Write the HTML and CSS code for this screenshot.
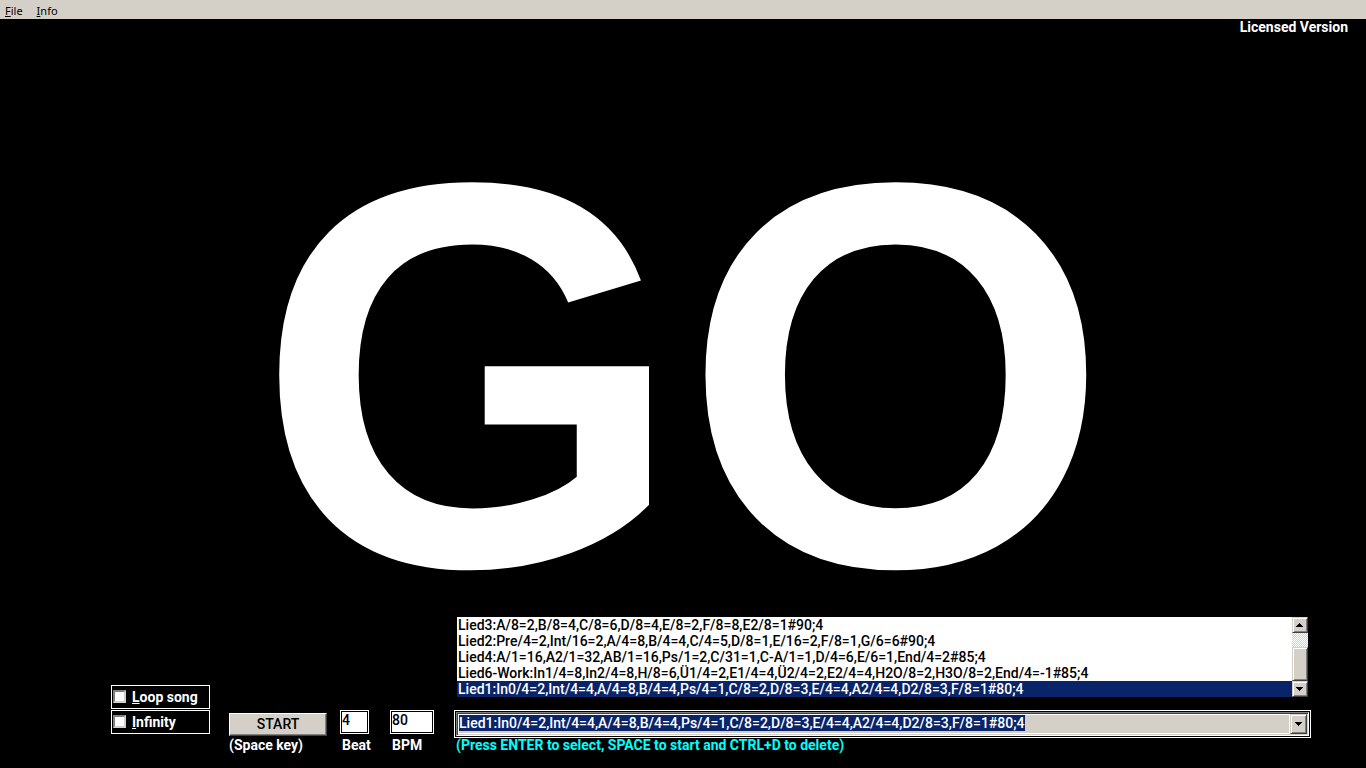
FILE: index.html
```html
<!DOCTYPE html>
<html lang="en">
<head>
<meta charset="utf-8">
<title>Song metronome</title>
<link rel="stylesheet" href="styles.css">
</head>
<body>
<nav class="menubar">
  <button type="button" class="menu"><u>F</u>ile</button>
  <button type="button" class="menu"><u>I</u>nfo</button>
</nav>
<main class="stage">
  <p class="license">Licensed Version</p>
  <div class="cue">GO</div>
</main>
<form class="controls">
  <div class="options">
    <label class="option"><input type="checkbox" class="check"><span><u>L</u>oop song</span></label>
    <label class="option"><input type="checkbox" class="check"><span><u>I</u>nfinity</span></label>
  </div>
  <div class="field start">
    <button type="button" class="start-button">START</button>
    <span class="caption">(Space key)</span>
  </div>
  <div class="field beat">
    <input class="number" id="beat" type="text" value="4">
    <label class="caption" for="beat">Beat</label>
  </div>
  <div class="field bpm">
    <input class="number" id="bpm" type="text" value="80">
    <label class="caption" for="bpm">BPM</label>
  </div>
  <div class="songs">
    <div class="list">
      <select class="list-items" size="5" aria-label="Songs">
        <option>Lied3:A/8=2,B/8=4,C/8=6,D/8=4,E/8=2,F/8=8,E2/8=1#90;4</option>
        <option>Lied2:Pre/4=2,Int/16=2,A/4=8,B/4=4,C/4=5,D/8=1,E/16=2,F/8=1,G/6=6#90;4</option>
        <option>Lied4:A/1=16,A2/1=32,AB/1=16,Ps/1=2,C/31=1,C-A/1=1,D/4=6,E/6=1,End/4=2#85;4</option>
        <option>Lied6-Work:In1/4=8,In2/4=8,H/8=6,Ü1/4=2,E1/4=4,Ü2/4=2,E2/4=4,H2O/8=2,H3O/8=2,End/4=-1#85;4</option>
        <option selected>Lied1:In0/4=2,Int/4=4,A/4=8,B/4=4,Ps/4=1,C/8=2,D/8=3,E/4=4,A2/4=4,D2/8=3,F/8=1#80;4</option>
      </select>
      <div class="scrollbar">
        <button type="button" class="arrow" aria-label="Scroll up"><svg width="7" height="4" viewBox="0 0 7 4" shape-rendering="crispEdges"><path d="M3 0h1v1h1v1h1v1h1v1H0V3h1V2h1V1h1z"/></svg></button>
        <div class="track"></div>
        <div class="thumb"></div>
        <button type="button" class="arrow" aria-label="Scroll down"><svg width="7" height="4" viewBox="0 0 7 4" shape-rendering="crispEdges"><path d="M0 0h7v1H6v1H5v1H4v1H3V3H2V2H1V1H0z"/></svg></button>
      </div>
    </div>
    <div class="combo">
      <div class="combo-inner">
        <input class="combo-text" id="song" type="text" value="Lied1:In0/4=2,Int/4=4,A/4=8,B/4=4,Ps/4=1,C/8=2,D/8=3,E/4=4,A2/4=4,D2/8=3,F/8=1#80;4">
        <button type="button" class="arrow combo-arrow" aria-label="Open song list"><svg width="7" height="4" viewBox="0 0 7 4" shape-rendering="crispEdges"><path d="M0 0h7v1H6v1H5v1H4v1H3V3H2V2H1V1H0z"/></svg></button>
      </div>
    </div>
    <label class="caption hint" for="song">(Press ENTER to select, SPACE to start and CTRL+D to delete)</label>
  </div>
</form>
<script src="app.js"></script>
</body>
</html>
```
FILE: app.js
```js
const song = document.getElementById("song");
song.focus();
song.select();
```
FILE: styles.css
```css
* {
  box-sizing: border-box;
}

body {
  margin: 0;
  min-height: 100vh;
  display: flex;
  flex-direction: column;
  background: #000;
  color: #fff;
  font: 500 14px/16px Roboto, "Liberation Sans", sans-serif;
}

button,
input,
select {
  margin: 0;
  padding: 0;
  border: 0;
  border-radius: 0;
  font: inherit;
  color: #000;
  outline: 0;
}

.menubar {
  display: flex;
  gap: 14px;
  height: 19px;
  padding: 3px 5px 0;
  background: #d4d0c8;
}

.menu {
  background: none;
  font: 11px/16px "Noto Sans", sans-serif;
}

.stage {
  flex: 1;
  display: flex;
  flex-direction: column;
}

.license {
  margin: 0;
  padding: 0 18px;
  font-weight: 700;
  text-align: right;
}

.cue {
  margin: auto;
  padding-top: 98px;
  font: bold 548px/388px "Liberation Sans", Arial, sans-serif;
}

.controls {
  display: flex;
  align-items: flex-end;
  padding: 0 55px 15px 111px;
}

.options {
  display: grid;
  gap: 1px;
  width: 99px;
  margin: 0 19px 19px 0;
}

.option {
  display: flex;
  align-items: center;
  gap: 6px;
  height: 24px;
  padding: 0 0 1px 1px;
  border: 1px solid #fff;
  font-weight: 700;
}

.check {
  appearance: none;
  width: 13px;
  height: 13px;
  background: #fff;
  border: 2px solid;
  border-color: #808080 #d4d0c8 #d4d0c8 #808080;
}

.check:checked {
  background: #0a246a;
}

.field {
  display: flex;
  flex-direction: column;
}

.start {
  gap: 2px;
  width: 98px;
  margin-right: 13px;
}

.start-button,
.arrow,
.thumb {
  background: #d4d0c8;
  border: 1px solid;
  border-color: #fff #404040 #404040 #fff;
  box-shadow: inset -1px -1px #808080;
}

.start-button {
  height: 23px;
  padding-bottom: 1px;
}

.beat,
.bpm {
  gap: 4px;
}

.beat {
  width: 29px;
  margin-right: 21px;
}

.bpm {
  width: 44px;
  margin-right: 20px;
}

.number {
  width: 100%;
  height: 24px;
  padding-bottom: 4px;
  background: #fff;
  border: 2px solid #000;
  outline: 1px solid #fff;
  outline-offset: -1px;
}

.field .caption {
  padding-left: 2px;
}

.start .caption {
  padding-left: 0;
}

.caption {
  height: 15px;
  font-weight: 700;
  line-height: 15px;
  white-space: nowrap;
}

.songs {
  flex: 1;
  min-width: 0;
  display: flex;
  flex-direction: column;
}

.list {
  display: flex;
  margin: 0 3px 13px;
}

.list-items {
  flex: 1;
  min-width: 0;
  height: 80px;
  background: #fff;
  overflow: hidden;
}

.list-items option {
  height: 16px;
  min-height: 16px;
  padding: 0 1px;
  font-weight: 500;
  line-height: 16px;
}

.list-items option:checked {
  background: #0a246a linear-gradient(#0a246a, #0a246a);
  color: #fff;
  -webkit-text-fill-color: #fff;
}

.scrollbar {
  display: flex;
  flex-direction: column;
  width: 16px;
}

.arrow {
  display: flex;
  align-items: center;
  justify-content: center;
  height: 16px;
  padding: 0 1px 1px 0;
  border-color: #d4d0c8 #404040 #404040 #d4d0c8;
  box-shadow: inset 1px 1px #fff, inset -1px -1px #808080;
}

.track {
  flex: 1;
  background: repeating-conic-gradient(#fff 0 25%, #d4d0c8 0 50%) 0 0 / 2px 2px;
}

.thumb {
  height: 34px;
  border-color: #d4d0c8 #404040 #404040 #d4d0c8;
  box-shadow: inset 1px 1px #fff, inset -1px -1px #808080;
}

.combo {
  height: 28px;
  padding: 1px;
  border: 1px solid #fff;
}

.combo-inner {
  display: flex;
  height: 24px;
  background: #d4d0c8;
  border: 1px solid;
  border-color: #808080 #fff #fff #808080;
  box-shadow: inset 1px 1px #404040;
  padding: 1px;
}

.combo-text {
  flex: 1;
  min-width: 0;
  padding: 0 0 2px;
  background: #d4d0c8;
  border: 1px solid #fff;
  caret-color: transparent;
}

.combo-text::selection {
  background: #0a246a;
  color: #fff;
}

.combo-arrow {
  width: 17px;
  height: 20px;
}

.hint {
  padding-left: 2px;
  color: #0ff;
}
```
